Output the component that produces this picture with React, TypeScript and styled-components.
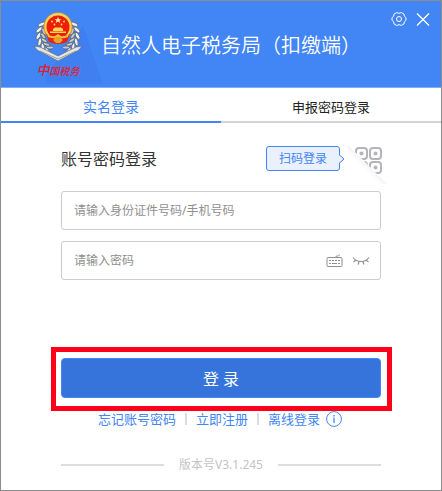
import React, { useState } from 'react';
import styled, { createGlobalStyle } from 'styled-components';

const BLUE = '#4285f5';
const LINE = '#dcdce4';

const GlobalStyle = createGlobalStyle`
  *, *::before, *::after { box-sizing: border-box; }
  body {
    margin: 0;
    background: #fff;
    font-family: "Noto Sans", "Noto Sans CJK SC", sans-serif;
    font-size: 12px;
  }
  button, input { font-family: inherit; }
  button { padding: 0; border: 0; background: none; cursor: pointer; }
  svg { display: block; }
`;

const Window = styled.main`
  display: flex;
  flex-direction: column;
  min-height: 100vh;
  border: 1px solid #8c8c8c;
  background: #fff;
`;

const Header = styled.header`
  position: relative;
  display: flex;
  gap: 16px;
  height: 87px;
  padding: 10px 12px 0 30px;
  color: #fff;
  background: ${BLUE};
  border-bottom: 1px solid #7fb0f7;
`;

const HeaderShade = styled.svg`
  position: absolute;
  left: 44px;
  top: 24px;
`;

const Brand = styled.div`
  position: relative;
  display: flex;
  flex-direction: column;
  align-items: center;
  width: 54px;
`;

const BrandName = styled.span`
  color: #e0202c;
  font-size: 10px;
  font-style: italic;
  font-weight: 500;
  line-height: 14px;
  white-space: nowrap;
  &::first-letter { font-size: 13px; }
`;

const Title = styled.h1`
  position: relative;
  margin: 20px 0 0;
  font-size: 20px;
  font-weight: 350;
  line-height: 30px;
  white-space: nowrap;
`;

const WindowActions = styled.div`
  position: absolute;
  top: 10px;
  right: 10px;
  display: flex;
  gap: 8px;
`;

const IconButton = styled.button`
  display: flex;
  align-items: center;
  justify-content: center;
  width: 16px;
  height: 16px;
  color: inherit;
`;

const Tabs = styled.div`
  display: flex;
`;

const Tab = styled.button<{ $active: boolean }>`
  flex: 1;
  height: 35px;
  padding-top: 3px;
  border-bottom: 2px solid ${(p) => (p.$active ? BLUE : '#d2d2d8')};
  color: ${(p) => (p.$active ? BLUE : '#222')};
  font-size: ${(p) => (p.$active ? 14 : 13)}px;
`;

const Form = styled.form`
  display: flex;
  flex-direction: column;
  padding: 19px 60px 0;
`;

const FormHead = styled.div`
  display: flex;
  align-items: flex-start;
  height: 49px;
`;

const FormTitle = styled.h2`
  flex: 1;
  margin: 5px 0 0;
  color: #333;
  font-size: 16px;
  font-weight: 400;
  line-height: 24px;
`;

const ScanTip = styled.button`
  position: relative;
  width: 74px;
  height: 25px;
  margin: 4px 8px 0 0;
  border: 1px solid ${BLUE};
  border-radius: 3px;
  color: ${BLUE};
  background: #eaf1fd;
  font-size: 12px;
  line-height: 23px;
`;

const TipArrow = styled.svg`
  position: absolute;
  top: 8px;
  left: 72px;
`;

const QrButton = styled.button`
  margin-right: -7px;
`;

const Field = styled.div`
  display: flex;
  align-items: center;
  gap: 9px;
  height: 39px;
  margin-bottom: 11px;
  padding: 0 10px 0 12px;
  border: 1px solid #ccc;
  border-radius: 3px;
`;

const TextInput = styled.input`
  flex: 1;
  min-width: 0;
  padding: 0;
  border: 0;
  outline: 0;
  color: #333;
  background: none;
  font-size: 12px;
  line-height: 18px;
  &::placeholder { color: #8f8f8f; opacity: 1; }
`;

const FieldIcon = styled.button`
  color: #909090;
`;

const SubmitFrame = styled.div`
  display: flex;
  margin: 56px -11px 0 -10px;
  padding: 6px 6px 8px 5px;
  border: 5px solid #fe0019;
`;

const Submit = styled.button`
  flex: 1;
  height: 40px;
  border: 1px solid ${BLUE};
  border-radius: 4px;
  color: #fff;
  background: #3674dc;
  font-size: 16px;
`;

const Links = styled.nav`
  display: flex;
  align-items: center;
  justify-content: center;
  gap: 9px;
  height: 16px;
  padding-right: 2px;
`;

const TextLink = styled.a`
  color: ${BLUE};
  font-size: 13px;
  line-height: 18px;
  text-decoration: none;
  white-space: nowrap;
`;

const Divider = styled.span`
  width: 2px;
  height: 12px;
  background: ${LINE};
`;

const InfoButton = styled.button`
  margin-left: -3px;
  color: ${BLUE};
`;

const Version = styled.footer`
  display: flex;
  align-items: center;
  gap: 15px;
  margin: 29px 60px 0;
  color: #c4c4c8;
  font-size: 12px;
  line-height: 18px;
  &::before, &::after {
    content: "";
    flex: 1;
    height: 2px;
    background: ${LINE};
  }
`;

const leaves = [62, 80, 98, 116, 134, 152].map((angle) => {
  const t = (angle * Math.PI) / 180;
  return { x: 27 + 17 * Math.sin(t), y: 24 - 17 * Math.cos(t), angle };
});

function Emblem() {
  const wreath = leaves.map((l) => (
    <g key={l.angle} transform={`translate(${l.x} ${l.y}) rotate(${l.angle})`}>
      <ellipse cx="0" cy="-3" rx="4" ry="1.7" transform="rotate(-38)" fill="#eef0f0" stroke="#56606c" strokeWidth=".7" />
      <ellipse cx="0" cy="2.5" rx="3.6" ry="1.5" transform="rotate(28)" fill="#c6cbce" stroke="#4c5662" strokeWidth=".7" />
    </g>
  ));
  return (
    <svg width="54" height="52" viewBox="0 0 54 52" aria-hidden="true">
      <g>{wreath}</g>
      <g transform="translate(54 0) scale(-1 1)">{wreath}</g>
      <path d="M3 35l6 1 18 9 18-9 6-1-3 4-21 11L6 39z" fill="#e4e6e8" stroke="#68727e" strokeWidth=".8" />
      <path d="M9 40l18 8 18-8" fill="none" stroke="#828c94" strokeWidth=".8" />
      <circle cx="27" cy="16" r="14.5" fill="#dd9926" />
      <circle cx="27" cy="15.5" r="13.5" fill="#f8d25b" />
      <circle cx="27" cy="16" r="11.5" fill="#ee1e08" />
      <path d="M27 6l1 2.2h2.4l-1.9 1.5.7 2.3-2.2-1.4-2.2 1.4.7-2.3-1.9-1.5H26z" fill="#fff0b0" />
      <g fill="#ffda54">
        <circle cx="21" cy="10.5" r=".9" />
        <circle cx="33" cy="10.5" r=".9" />
        <circle cx="23.5" cy="13.5" r=".9" />
        <circle cx="30.5" cy="13.5" r=".9" />
        <path d="M22 18l2-1.5h6l2 1.5v2H22zM19 20.5h16V22H19z" />
      </g>
      <path d="M15 23q12 6 24 0l-3 8q-9 4-18 0z" fill="#e52412" />
      <path d="M16 23q5 3 8 2l3-2 3 2q3 1 8-2l-1 3q-5 2-8 1l-2-1-2 1q-3 1-8-1z" fill="#f4bd38" />
      <path d="M22 29l3-3h4l3 3-3 3h-4z" fill="#e9a32a" />
    </svg>
  );
}

function GearIcon() {
  return (
    <svg width="16" height="16" viewBox="0 0 16 16" fill="none" stroke="currentColor" strokeWidth="1" strokeLinejoin="round">
      <path d="M5.6 1.6Q8 3 10.4 1.6L12.9 3Q12.8 5.6 15 6.7V9.3Q12.8 10.4 12.9 13L10.4 14.4Q8 13 5.6 14.4L3.1 13Q3.2 10.4 1 9.3V6.7Q3.2 5.6 3.1 3Z" />
      <circle cx="8" cy="8" r="2.5" />
    </svg>
  );
}

function CloseIcon() {
  return (
    <svg width="16" height="16" viewBox="0 0 16 16" fill="none" stroke="currentColor" strokeWidth="1.3">
      <path d="M2 2.5l12 12M14 2.5l-12 12" />
    </svg>
  );
}

function QrIcon() {
  return (
    <svg width="40" height="42" viewBox="-7 -5 40 42">
      <defs>
        <clipPath id="qr-fold">
          <path d="M-7 -2L33 38V-5H-7z" />
        </clipPath>
        <linearGradient id="qr-shade" x1="12" y1="17" x2="8" y2="21" gradientUnits="userSpaceOnUse">
          <stop offset="0" stopColor="#f4f4f5" />
          <stop offset="1" stopColor="#fff" />
        </linearGradient>
      </defs>
      <path d="M-7 -2L32 37H22L-7 8z" fill="url(#qr-shade)" />
      <g clipPath="url(#qr-fold)" fill="none" stroke="#b4b4ba" strokeWidth="2">
        <rect x="1" y="1" width="11" height="11" rx="3" />
        <rect x="15" y="1" width="11" height="11" rx="3" />
        <rect x="15" y="15" width="11" height="11" rx="3" />
        <rect x="1" y="15" width="11" height="11" rx="3" />
        <g fill="#b4b4ba" stroke="none">
          <circle cx="6.5" cy="6.5" r="2" />
          <circle cx="20.5" cy="6.5" r="2" />
          <circle cx="20.5" cy="20.5" r="2" />
        </g>
      </g>
    </svg>
  );
}

function KeyboardIcon() {
  return (
    <svg width="17" height="14" viewBox="0 0 17 14" fill="none" stroke="currentColor">
      <rect x="1" y="3.5" width="15" height="9" rx="1" />
      <path d="M9.5 3.5q.5-2 2-1.5T13.5.5" />
      <path d="M3 6.5h11" strokeDasharray="2 1" />
      <path d="M3 9.5h2M6 9.5h5M12 9.5h2" />
    </svg>
  );
}

function ClosedEyeIcon() {
  return (
    <svg width="18" height="10" viewBox="0 0 18 10" fill="none" stroke="currentColor" strokeWidth="1.2">
      <path d="M1 1.5Q4 5.5 9 5.5T17 1.5" />
      <path d="M4 4L1.5 6M7 5.5L6.2 8.5M11 5.5l.8 3M14 4l2.5 2" />
    </svg>
  );
}

function InfoIcon() {
  return (
    <svg width="16" height="16" viewBox="0 0 16 16" fill="none" stroke="currentColor">
      <circle cx="8" cy="8" r="7.4" />
      <path d="M8 4v1.5M8 6.5v5.5" strokeWidth="1.3" />
    </svg>
  );
}

export default function App() {
  const [tab, setTab] = useState(0);
  return (
    <>
      <GlobalStyle />
      <Window>
        <Header>
          <HeaderShade width="60" height="60" viewBox="0 0 60 60" aria-hidden="true">
            <path d="M38 0l20 59H2L0 52z" fill="#407ff0" />
          </HeaderShade>
          <Brand>
            <Emblem />
            <BrandName>中国税务</BrandName>
          </Brand>
          <Title>自然人电子税务局（扣缴端）</Title>
          <WindowActions>
            <IconButton type="button" aria-label="设置"><GearIcon /></IconButton>
            <IconButton type="button" aria-label="关闭"><CloseIcon /></IconButton>
          </WindowActions>
        </Header>
        <Tabs role="tablist">
          {['实名登录', '申报密码登录'].map((name, i) => (
            <Tab key={name} type="button" role="tab" aria-selected={tab === i} $active={tab === i} onClick={() => setTab(i)}>
              {name}
            </Tab>
          ))}
        </Tabs>
        <Form onSubmit={(e) => e.preventDefault()}>
          <FormHead>
            <FormTitle>账号密码登录</FormTitle>
            <ScanTip type="button">
              扫码登录
              <TipArrow width="6" height="8" viewBox="0 0 6 8" aria-hidden="true">
                <path d="M0 0l5 4-5 4z" fill="#eaf1fd" />
                <path d="M0.5 0l4.5 4-4.5 4" fill="none" stroke={BLUE} />
              </TipArrow>
            </ScanTip>
            <QrButton type="button" aria-label="二维码"><QrIcon /></QrButton>
          </FormHead>
          <Field>
            <TextInput type="text" aria-label="账号" placeholder="请输入身份证件号码/手机号码" />
          </Field>
          <Field>
            <TextInput type="password" aria-label="密码" placeholder="请输入密码" />
            <FieldIcon type="button" aria-label="软键盘"><KeyboardIcon /></FieldIcon>
            <FieldIcon type="button" aria-label="显示密码"><ClosedEyeIcon /></FieldIcon>
          </Field>
          <SubmitFrame>
            <Submit type="submit">登 录</Submit>
          </SubmitFrame>
          <Links>
            <TextLink href="#forgot">忘记账号密码</TextLink>
            <Divider />
            <TextLink href="#register">立即注册</TextLink>
            <Divider />
            <TextLink href="#offline">离线登录</TextLink>
            <InfoButton type="button" aria-label="说明"><InfoIcon /></InfoButton>
          </Links>
        </Form>
        <Version>版本号V3.1.245</Version>
      </Window>
    </>
  );
}
